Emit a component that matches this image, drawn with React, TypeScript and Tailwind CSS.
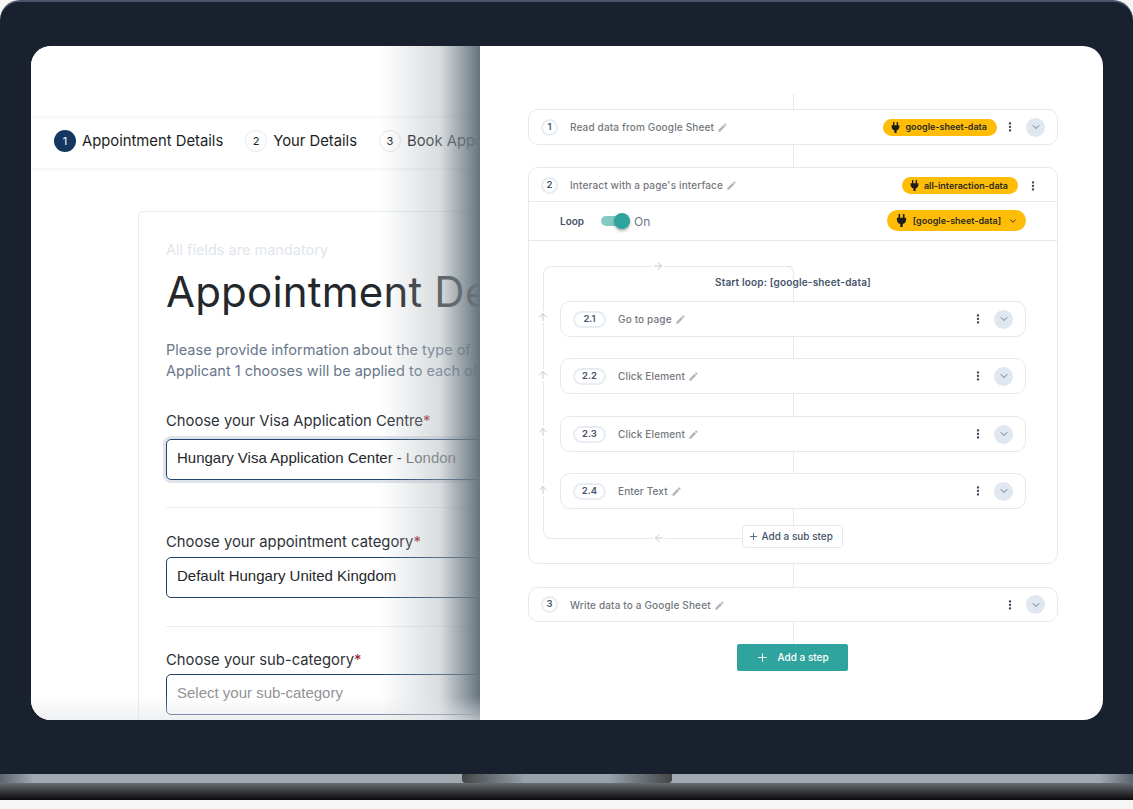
import { ArrowLeft, ArrowRight, ArrowUp, ChevronDown, Plus } from 'lucide-react'
import { MdEdit, MdMoreVert } from 'react-icons/md'

const subSteps = [
  { id: '2.1', name: 'Go to page', gap: 'h-[21px]', nudge: '' },
  { id: '2.2', name: 'Click Element', gap: 'h-[22px]', nudge: 'mt-[1px]' },
  { id: '2.3', name: 'Click Element', gap: 'h-[21px]', nudge: '' },
  { id: '2.4', name: 'Enter Text', gap: 'h-[16px]', nudge: 'mt-[1px]' },
]

function PlugIcon({ className }: { className: string }) {
  return (
    <svg viewBox="0 0 24 24" className={className} fill="currentColor">
      <rect x="6.5" y="0" width="3" height="8" rx="0.8" />
      <rect x="14.5" y="0" width="3" height="8" rx="0.8" />
      <path d="M3.5 7h17v3.5c0 4-2.6 7-6.2 7.9V24h-4.6v-5.6C6.1 17.5 3.5 14.5 3.5 10.5z" />
    </svg>
  )
}

function Title({ children }: { children: string }) {
  return (
    <div className="flex items-center gap-[3px] text-[10px] font-medium tracking-[0.15px] text-[#74787e]">
      {children}
      <MdEdit size={11} className="text-[#b4b6b9]" />
    </div>
  )
}

function Tag({ children }: { children: string }) {
  return (
    <div className="flex h-[17px] items-center gap-[4px] rounded-full bg-[#ffbd08] pl-[7px] pr-[10px] text-[9px] font-semibold text-[#2a2a24]">
      <PlugIcon className="size-[11px] text-[#1d1d1a]" />
      {children}
    </div>
  )
}

function Kebab() {
  return <MdMoreVert size={14} className="text-[#3f4a5c]" />
}

function Toggle() {
  return (
    <div className="flex size-[19px] items-center justify-center rounded-full bg-[#e1e7f0]">
      <ChevronDown size={12} strokeWidth={1.7} className="text-[#56637a]" />
    </div>
  )
}

function Num({ n }: { n: string }) {
  return (
    <div className="flex size-[17px] items-center justify-center rounded-full border-2 border-[#e8edf4] text-[9.5px] font-semibold text-[#46536a]">
      {n}
    </div>
  )
}

function Line({ h }: { h: string }) {
  return <div className={`w-px self-center bg-[#e4e9f1] ${h}`} />
}

function FormField({ label, value, muted, placeholder, focus, gap }: { label: string; value?: string; muted?: string; placeholder?: string; focus?: boolean; gap: string }) {
  return (
    <div>
      <div className="text-[14.8px] leading-[20px] text-[#2d3138]">
        {label}<span className="text-[#a5232f]">*</span>
      </div>
      <div className={`flex h-[41px] items-center rounded-[5px] border border-[#21426d] px-[10px] pb-[3px] font-['Liberation_Sans',sans-serif] text-[15px] text-[#24272c] ${gap} ${focus ? 'shadow-[0_0_0_3px_#dfe3ea]' : ''}`}>
        {value}
        {muted && <span className="ml-[4px] text-[#6e7072]">{muted}</span>}
        {placeholder && <span className="text-[#8f9296]">{placeholder}</span>}
      </div>
    </div>
  )
}

export default function App() {
  return (
    <div className="flex h-[809px] w-[1133px] flex-col overflow-hidden bg-[#f6f6f6] font-['Inter',sans-serif]">
      {/* laptop lid */}
      <div className="h-[774px] shrink-0 rounded-t-[20px] border-t-2 border-[#48556b] bg-[#1a212e] pl-[31px] pr-[30px] pt-[44px]">
        <div className="flex h-[674px] overflow-hidden rounded-[20px] bg-white">
          {/* left: the form being automated */}
          <div className="relative w-[449px] shrink-0 overflow-hidden bg-white">
            <div className="mt-[72px] flex h-[50px] items-center gap-[22px] whitespace-nowrap pb-[4px] pl-[23px] text-[14.8px] shadow-[0_0_4px_rgba(30,40,60,0.12)]">
              <div className="flex items-center gap-[6px] text-[#1b1e24]">
                <div className="flex size-[22px] items-center justify-center rounded-full bg-[#14365f] text-[11px] text-white">1</div>
                Appointment Details
              </div>
              <div className="flex items-center gap-[6px] text-[#1b1e24]">
                <div className="flex size-[22px] items-center justify-center rounded-full border border-[#e6e8eb] text-[11px]">2</div>
                Your Details
              </div>
              <div className="flex items-center gap-[6px] text-[#1b1e24]">
                <div className="flex size-[22px] items-center justify-center rounded-full border border-[#e6e8eb] text-[11px]">3</div>
                Book Appointment
              </div>
            </div>

            <div className="ml-[107px] mt-[43px] h-[600px] w-[700px] rounded-[5px] border border-[#e4eaf2] px-[27px] pt-[28px]">
              <div className="text-[14.5px] leading-[20px] text-[#e1e5ec]">All fields are mandatory</div>
              <div className="mt-[6px] whitespace-nowrap text-[42px] leading-[52px] tracking-[0.2px] text-[#24272c]">Appointment Details</div>
              <div className="mt-[21px] whitespace-nowrap text-[14.5px] leading-[21px] text-[#68778a]">
                <div>Please provide information about the type of appointment</div>
                <div>Applicant 1 chooses will be applied to each of the applicants</div>
              </div>
              <div className="mt-[30px]">
                <FormField label="Choose your Visa Application Centre" value="Hungary Visa Application Center -" muted="London" focus gap="mt-[8px]" />
              </div>
              <div className="mb-[24px] mt-[27px] h-px bg-[#eceef1]" />
              <FormField label="Choose your appointment category" value="Default Hungary United Kingdom" gap="mt-[5px]" />
              <div className="mb-[23px] mt-[28px] h-px bg-[#eceef1]" />
              <FormField label="Choose your sub-category" placeholder="Select your sub-category" gap="mt-[4px]" />
            </div>

            {/* shadow falling from the right-hand panel */}
            <div className="absolute inset-y-0 right-0 w-[100px] bg-gradient-to-r from-white/0 via-[#aab2b7]/45 via-[60%] to-[#66747d]" />
            <div className="absolute inset-x-0 bottom-0 h-[24px] bg-gradient-to-b from-white/0 to-[#e4e6e9]/60" />
          </div>

          {/* right: the workflow builder */}
          <div className="flex flex-1 flex-col pl-[48px] pr-[45px]">
            <div className="h-[48px] shrink-0" />
            <Line h="h-[15px]" />
            <div className="flex h-[36px] items-center rounded-[10px] border border-[#e4e9f1] px-[12px]">
              <Num n="1" />
              <div className="ml-[12px] mt-[1px] flex-1"><Title>Read data from Google Sheet</Title></div>
              <Tag>google-sheet-data</Tag>
              <div className="ml-[6px] mr-[9px]"><Kebab /></div>
              <Toggle />
            </div>
            <Line h="h-[22px]" />

            <div className="relative flex h-[397px] flex-col rounded-[10px] border border-[#e4e9f1]">
              <div className="flex h-[34px] shrink-0 items-center border-b border-[#e4e9f1] pl-[12px] pr-[17px] pt-[2px]">
                <Num n="2" />
                <div className="ml-[12px] flex-1"><Title>Interact with a page's interface</Title></div>
                <Tag>all-interaction-data</Tag>
                <div className="ml-[8px]"><Kebab /></div>
              </div>
              <div className="flex h-[39px] shrink-0 items-center border-b border-[#e4e9f1] pl-[31px] pr-[31px]">
                <div className="w-[41px] text-[10px] font-semibold text-[#46536a]">Loop</div>
                <div className="relative h-[10px] w-[29px] rounded-full bg-[#85c9c4]">
                  <div className="absolute -top-[3px] right-0 size-[16px] rounded-full bg-[#2fa39d] shadow-[0_2px_3px_rgba(0,0,0,0.3)]" />
                </div>
                <div className="ml-[4px] mt-[2px] flex-1 text-[12px] text-[#68778a]">On</div>
                <div className="-mt-[1px] flex h-[21px] items-center rounded-full bg-[#ffbd08] pl-[8px] pr-[8px] text-[9px] font-semibold text-[#2a2a24]">
                  <PlugIcon className="size-[13px] text-[#1d1d1a]" />
                  <span className="ml-[5px]">[google-sheet-data]</span>
                  <ChevronDown size={10} strokeWidth={2.2} className="ml-[7px]" />
                </div>
              </div>

              <div className="relative flex flex-1 flex-col px-[31px] pt-[60px]">
                {/* loop outline */}
                <div className="absolute left-[14px] top-[25px] h-[273px] w-[250px] rounded-l-[8px] border-y border-l border-[#e4e9f1]" />
                <div className="absolute left-[255px] top-[25px] h-[36px] w-[10px] rounded-tr-[8px] border-r border-t border-[#e4e9f1]" />
                <ArrowRight size={12} className="absolute left-[123px] top-[19px] bg-white text-[#c4c8cd]" />
                <ArrowLeft size={12} className="absolute left-[124px] top-[291px] bg-white text-[#c4c8cd]" />
                <div className="absolute inset-x-0 top-[34px] text-center text-[10px] font-semibold tracking-[0.17px] text-[#46536a]">Start loop: [google-sheet-data]</div>
                <ArrowUp size={12} className="absolute left-[8px] top-[70px] bg-white text-[#c4c8cd]" />
                <ArrowUp size={12} className="absolute left-[8px] top-[128px] bg-white text-[#c4c8cd]" />
                <ArrowUp size={12} className="absolute left-[8px] top-[185px] bg-white text-[#c4c8cd]" />
                <ArrowUp size={12} className="absolute left-[8px] top-[243px] bg-white text-[#c4c8cd]" />

                {subSteps.map((s) => (
                  <div key={s.id} className="relative flex flex-col">
                    <div className="flex h-[36px] items-center rounded-[10px] border border-[#e4e9f1] bg-white px-[12px]">
                      <div className="flex h-[17px] w-[33px] items-center justify-center rounded-full border-2 border-[#e8edf4] text-[9.5px] font-semibold text-[#46536a]">{s.id}</div>
                      <div className={`ml-[12px] flex-1 ${s.nudge}`}><Title>{s.name}</Title></div>
                      <div className="mr-[9px]"><Kebab /></div>
                      <Toggle />
                    </div>
                    <Line h={s.gap} />
                  </div>
                ))}
                <div className="relative -ml-[2px] flex h-[23px] w-[101px] items-center gap-[3px] self-center rounded-[3px] border border-[#e4e9f1] bg-white pl-[5px] text-[10px] font-medium text-[#46536a]">
                  <Plus size={11} strokeWidth={1.8} />
                  Add a sub step
                </div>
              </div>
            </div>

            <Line h="h-[23px]" />
            <div className="flex h-[35px] items-center rounded-[10px] border border-[#e4e9f1] px-[12px]">
              <Num n="3" />
              <div className="ml-[12px] mt-[1px] flex-1"><Title>Write data to a Google Sheet</Title></div>
              <div className="mr-[9px]"><Kebab /></div>
              <Toggle />
            </div>
            <Line h="h-[22px]" />
            <div className="-ml-[2px] flex h-[27px] w-[111px] items-center self-center rounded-[2px] bg-[#2fa39d] pl-[19px] text-[10px] font-medium text-white">
              <Plus size={13} strokeWidth={1.8} />
              <span className="ml-[9px]">Add a step</span>
            </div>
          </div>
        </div>
      </div>

      {/* laptop base */}
      <div className="flex h-[9px] shrink-0 justify-center bg-[linear-gradient(90deg,#5d646c,#a0a8b0_3%,#a0a8b0_97%,#5d646c)]">
        <div className="h-[9px] w-[210px] rounded-b-[4px] bg-[linear-gradient(90deg,#434547,#96a1a8_30%,#96a1a8_70%,#434547)]" />
      </div>
      <div className="h-[17px] shrink-0 bg-gradient-to-b from-[#696d71] to-[#0c0c0e]" />
    </div>
  )
}
